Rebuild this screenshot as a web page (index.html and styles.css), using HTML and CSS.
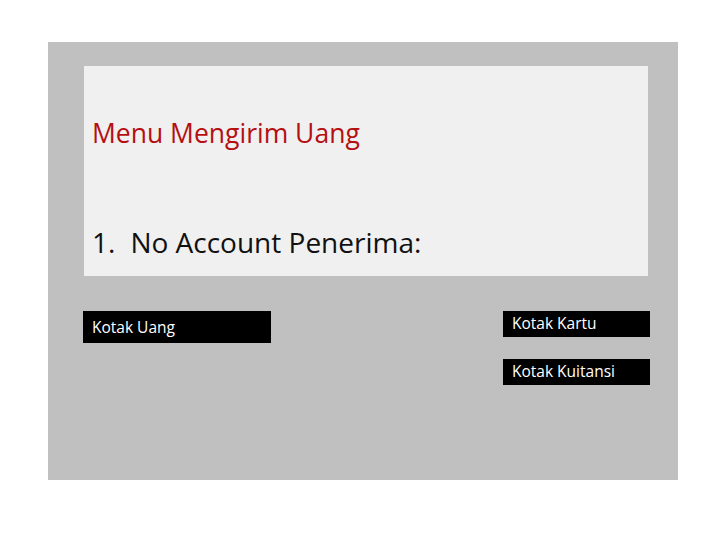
FILE: index.html
```html
<!DOCTYPE html>
<html>
<head>
    <title>Menu Mengirim Uang</title>
    <link rel="stylesheet" href="styles.css">
</head>
<body>
    <div class="screen">
        <div class="display">
            <h1 class="title">Menu Mengirim Uang</h1>
            <p class="prompt"><span class="num">1.</span>No Account Penerima:</p>
        </div>

        <div class="slots">
            <div class="slot slot-cash">Kotak Uang</div>
            <div class="slot-col">
                <div class="slot slot-small">Kotak Kartu</div>
                <div class="slot slot-small">Kotak Kuitansi</div>
            </div>
        </div>
    </div>
</body>
</html>
```

FILE: styles.css
```css
body {
    margin: 0;
    background-color: white;
    font-family: "Open Sans", "Liberation Sans", sans-serif;
}
.screen {
    width: 630px;
    height: 438px;
    margin: 42px 0 0 48px;
    padding-top: 24px;
    box-sizing: border-box;
    background-color: #c0c0c0;
}
.display {
    width: 564px;
    height: 210px;
    margin-left: 36px;
    padding: 0 8px;
    box-sizing: border-box;
    background-color: #f0f0f0;
    display: flex;
    flex-direction: column;
}
.title {
    margin: 49px 0 0 0;
    font-size: 26.5px;
    font-weight: normal;
    line-height: 36px;
    color: #b50f10;
}
.prompt {
    margin: 73px 0 0 0;
    font-size: 28px;
    line-height: 36px;
    color: #111;
}
.num {
    margin-right: 15px;
}
.slots {
    display: flex;
    margin: 35px 0 0 35px;
}
.slot {
    background-color: black;
    color: white;
    font-size: 15.5px;
    padding-left: 9px;
    box-sizing: border-box;
}
.slot-cash {
    width: 188px;
    height: 32px;
    line-height: 32px;
}
.slot-col {
    display: flex;
    flex-direction: column;
    gap: 22px;
    margin-left: 232px;
}
.slot-small {
    width: 147px;
    height: 26px;
    line-height: 25px;
}
```
